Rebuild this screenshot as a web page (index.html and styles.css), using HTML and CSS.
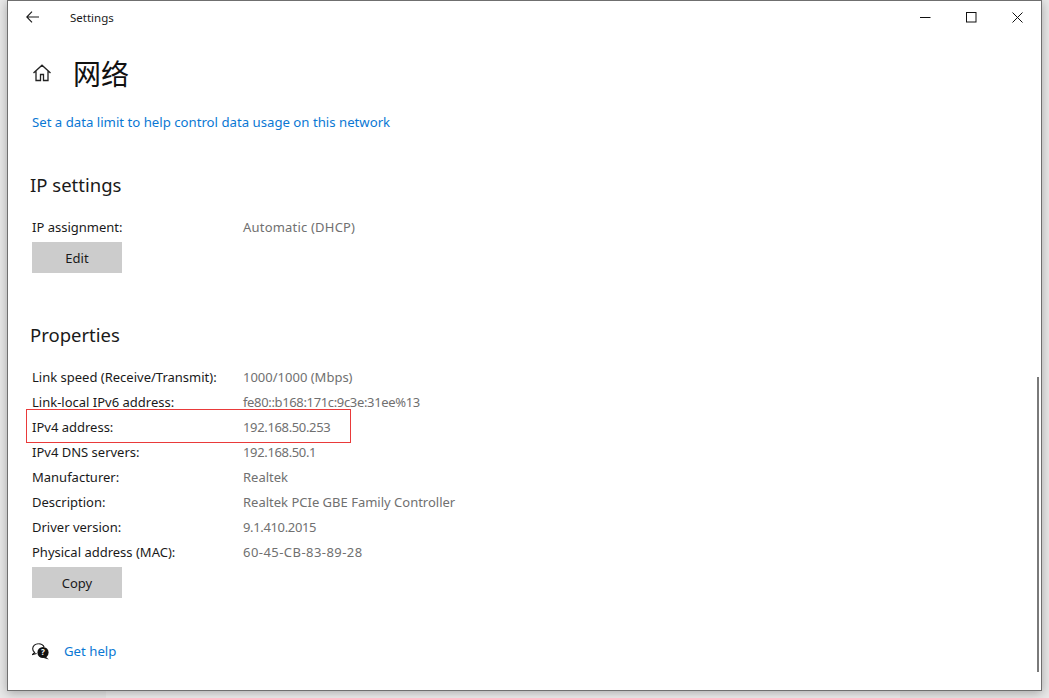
FILE: index.html
```html
<!DOCTYPE html>
<html lang="en">
<head>
<meta charset="utf-8">
<title>Settings</title>
<link rel="stylesheet" href="styles.css">
</head>
<body>
<div class="window">
  <header class="titlebar">
    <svg class="back" width="13" height="12" viewBox="0 0 13 12"><path d="M6 .6.8 6 6 11.400M.8 6H13" fill="none" stroke="#1a1a1a" stroke-width="1.100"/></svg>
    <span class="app-name">Settings</span>
    <div class="controls">
      <svg width="11" height="11" viewBox="0 0 11 11"><path d="M0 5.5h10.500" stroke="#111" stroke-width="1"/></svg>
      <svg width="11" height="11" viewBox="0 0 11 11"><rect x=".5" y=".5" width="9.500" height="9.500" fill="none" stroke="#111"/></svg>
      <svg width="11" height="11" viewBox="0 0 11 11"><path d="M.5.5l10 10M10.500.5l-10 10" stroke="#111" stroke-width="1"/></svg>
    </div>
  </header>
  <main class="content">
    <div class="page-head">
      <svg class="home" width="20" height="18" viewBox="0 0 20 18"><path d="M1.500 9 10 1.200 18.500 9M4 7v9.500h4.500v-6h3v6H16V7" fill="none" stroke="#222" stroke-width="1.300"/></svg>
      <h1>网络</h1>
    </div>
    <a class="link data-limit" href="#">Set a data limit to help control data usage on this network</a>
    <h2 class="ip-title">IP settings</h2>
    <div class="row"><span class="key">IP assignment:</span><span class="val loose">Automatic (DHCP)</span></div>
    <button class="btn">Edit</button>
    <h2 class="props-title">Properties</h2>
    <div class="row"><span class="key">Link speed (Receive/Transmit):</span><span class="val">1000/1000 (Mbps)</span></div>
    <div class="row"><span class="key">Link-local IPv6 address:</span><span class="val tight">fe80::b168:171c:9c3e:31ee%13</span></div>
    <div class="row"><span class="key">IPv4 address:</span><span class="val tight">192.168.50.253</span><span class="mark"></span></div>
    <div class="row"><span class="key">IPv4 DNS servers:</span><span class="val tight">192.168.50.1</span></div>
    <div class="row"><span class="key">Manufacturer:</span><span class="val">Realtek</span></div>
    <div class="row"><span class="key">Description:</span><span class="val">Realtek PCIe GBE Family Controller</span></div>
    <div class="row"><span class="key">Driver version:</span><span class="val tight">9.1.410.2015</span></div>
    <div class="row"><span class="key">Physical address (MAC):</span><span class="val wide">60-45-CB-83-89-28</span></div>
    <button class="btn">Copy</button>
    <div class="help">
      <svg width="18" height="17" viewBox="0 0 18 17"><path d="M6.500 .7C3.200 .7.700 2.900.700 5.700c0 1.500.7 2.800 1.900 3.700L.600 11.500l4-1" fill="#fff" stroke="#111" stroke-width="1.100"/><path d="M6.500 .7c2.600 0 4.800 1.300 5.600 3.300" fill="none" stroke="#111" stroke-width="1.100"/><circle cx="11" cy="9.500" r="5.600" fill="#111"/><path d="m13.500 13.500 3.300 3-5-1.500z" fill="#111"/><text x="11" y="12.300" text-anchor="middle" class="q">?</text></svg>
      <a class="link" href="#">Get help</a>
    </div>
    <div class="scrollbar"></div>
  </main>
</div>
</body>
</html>
```
FILE: styles.css
```css
* { box-sizing: border-box; }
html, body { margin: 0; height: 100%; }
body {
  width: 1049px;
  height: 698px;
  overflow: hidden;
  background: linear-gradient(90deg, #e9e9e9 0 106px, #f0f0f0 106px 900px, #e9e9e9 900px);
  font-family: "Noto Sans", "Noto Sans CJK SC", sans-serif;
  font-size: 13px;
  color: #1a1a1a;
}
.window {
  margin-left: 7px;
  width: 1035px;
  height: 691px;
  background: #fff;
  border: 1px solid #6f6f6f;
  box-shadow: 0 2px 10px rgba(0,0,0,.3);
  display: flex;
  flex-direction: column;
}
.titlebar {
  height: 32px;
  flex: none;
  display: flex;
  align-items: center;
  padding: 0 0 0 18px;
}
.back { flex: none; }
.app-name { margin-left: 31px; font-size: 11.5px; }
.controls {
  margin-left: auto;
  display: flex;
  gap: 35px;
  padding-right: 18px;
}
.content {
  position: relative;
  flex: 1;
  padding: 0 0 0 24px;
  display: flex;
  flex-direction: column;
  align-items: flex-start;
}
.page-head {
  display: flex;
  align-items: center;
  height: 40px;
  margin-top: 20px;
}
.home { flex: none; }
h1 {
  margin: 0 0 0 21px;
  font: 400 28px/40px "Noto Sans CJK SC", sans-serif;
  color: #111;
}
.link { color: #0a78d4; text-decoration: none; font-size: 13.2px; }
.data-limit { margin-top: 19px; line-height: 20px; }
h2 {
  margin: 0 0 0 -2px;
  font-weight: 400;
  font-size: 18.5px;
  line-height: 28px;
  color: #1a1a1a;
}
.ip-title { margin-top: 39px; }
.props-title { margin-top: 48px; }
.row {
  position: relative;
  display: flex;
  height: 25px;
  line-height: 25px;
  width: 600px;
}
.ip-title + .row { margin-top: 16px; }
.props-title + .row { margin-top: 16px; }
.key { width: 211px; flex: none; }
.val { color: #707070; }
.tight { letter-spacing: -.35px; }
.wide { letter-spacing: .45px; }
.loose { letter-spacing: .2px; }
.mark {
  position: absolute;
  left: -6px;
  top: -6px;
  width: 325px;
  height: 34px;
  border: 1px solid #e93a3a;
}
.btn {
  width: 90px;
  height: 31px;
  margin-top: 2px;
  border: 0;
  background: #cccccc;
  color: #1a1a1a;
  font: inherit;
  padding: 0;
}
.help {
  display: flex;
  align-items: center;
  gap: 14px;
  margin-top: 44px;
}
.q { fill: #fff; font: 700 8px "Noto Sans", sans-serif; }
.scrollbar {
  position: absolute;
  right: 2px;
  top: 344px;
  width: 2px;
  height: 295px;
  background: #7a7a7a;
}
```
